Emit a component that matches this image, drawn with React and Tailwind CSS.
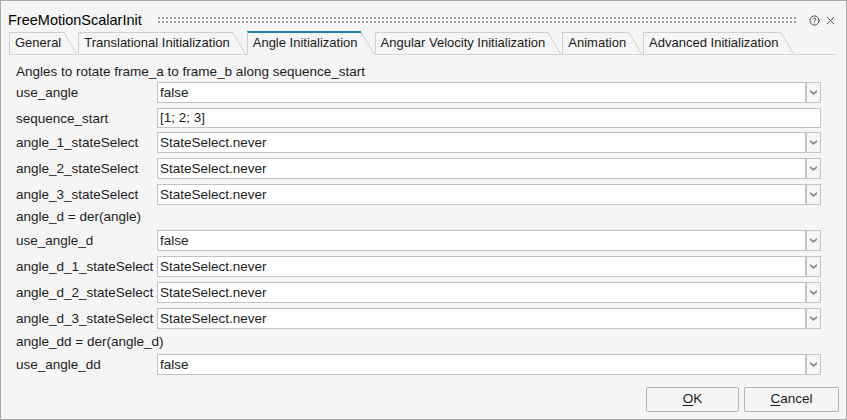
import { CircleHelp, X } from 'lucide-react';

const tabs = [
  { label: 'General' },
  { label: 'Translational Initialization' },
  { label: 'Angle Initialization', active: true },
  { label: 'Angular Velocity Initialization' },
  { label: 'Animation' },
  { label: 'Advanced Initialization' },
];

function Tab({ label, active }) {
  if (active) {
    return (
      <div className="relative z-10 -mb-px flex h-[24px] items-stretch">
        <div className="flex items-center border-t-2 border-l border-t-[#1f7fab] border-l-[#cfcfcf] bg-[#f5f5f5] pr-[3px] pl-[5px] pb-[3px]">
          {label}
        </div>
        <svg width="14" height="24" className="block">
          <polygon points="0,0 0.5,0 14,24 0,24" fill="#f5f5f5" />
          <line x1="0" y1="1" x2="13.5" y2="24" stroke="#cfcfcf" strokeWidth="1" />
        </svg>
      </div>
    );
  }
  return (
    <div className="mr-px flex h-[22px] items-stretch">
      <div className="flex items-center border-t border-l border-[#cfcfcf] pr-[3px] pl-[5px] pb-px">
        {label}
      </div>
      <svg width="13" height="22" className="block">
        <line x1="0" y1="0.5" x2="12.5" y2="22" stroke="#cfcfcf" strokeWidth="1" />
      </svg>
    </div>
  );
}

function Chevron() {
  return (
    <svg width="7" height="5" viewBox="0 0 7 5">
      <path d="M0 0 L3.5 2.6 L7 0 L7 2 L3.5 5 L0 2 Z" fill="#8c8c8c" />
    </svg>
  );
}

function Dropdown({ label, value, className = '' }) {
  return (
    <div className={`flex h-[21px] items-center ${className}`}>
      <div className="w-[141px] shrink-0 pt-[2px]">{label}</div>
      <div className="flex h-full flex-1">
        <div className="flex flex-1 items-center border border-[#c3c3c3] bg-white pl-[2px] pt-px">{value}</div>
        <div className="flex w-[15px] items-center justify-center border border-[#c3c3c3] bg-[#f5f5f5]">
          <Chevron />
        </div>
      </div>
    </div>
  );
}

function TextField({ label, value, className = '' }) {
  return (
    <div className={`flex h-[20px] items-center ${className}`}>
      <div className="w-[141px] shrink-0 pt-[2px]">{label}</div>
      <div className="flex h-full flex-1 items-center border border-[#c3c3c3] bg-white pl-[2px] pt-px">{value}</div>
    </div>
  );
}

export default function App() {
  return (
    <div className="flex h-[420px] w-[847px] flex-col border border-[#a8a8a8] bg-[#f5f5f5] font-['Liberation_Sans',Arial,sans-serif] text-[13.5px] text-[#1c1c1c]">
      <div className="flex h-[30px] shrink-0 items-start pt-[9px] pl-[7px] pr-[9px]">
        <div className="text-[14.5px] leading-[20px] text-black">FreeMotionScalarInit</div>
        <div className="mt-[6px] ml-[15px] h-[8px] flex-1 bg-[radial-gradient(circle_at_center,#9a9a9a_0_1px,transparent_1.1px)] bg-[length:4px_4px]" />
        <div className="mt-[4px] ml-[12px] flex items-center gap-[4px] text-[#3a3a3a]">
          <CircleHelp size={11} strokeWidth={2} />
          <X size={13} strokeWidth={1.5} />
        </div>
      </div>

      <div className="mx-[8px] mr-[10px] flex h-[24px] shrink-0 items-end border-b border-[#d4d4d4] text-[13px]">
        {tabs.map(t => (
          <Tab key={t.label} {...t} />
        ))}
      </div>

      <div className="flex flex-1 flex-col pt-[7px] pl-[15px] pr-[25px]">
        <div className="flex h-[20px] items-center">Angles to rotate frame_a to frame_b along sequence_start</div>
        <Dropdown label="use_angle" value="false" />
        <TextField label="sequence_start" value="[1; 2; 3]" className="mt-[5px]" />
        <Dropdown label="angle_1_stateSelect" value="StateSelect.never" className="mt-[4px]" />
        <Dropdown label="angle_2_stateSelect" value="StateSelect.never" className="mt-[5px]" />
        <Dropdown label="angle_3_stateSelect" value="StateSelect.never" className="mt-[5px]" />
        <div className="flex h-[22px] items-center pt-[2px]">angle_d = der(angle)</div>
        <Dropdown label="use_angle_d" value="false" className="mt-[3px]" />
        <Dropdown label="angle_d_1_stateSelect" value="StateSelect.never" className="mt-[5px]" />
        <Dropdown label="angle_d_2_stateSelect" value="StateSelect.never" className="mt-[5px]" />
        <Dropdown label="angle_d_3_stateSelect" value="StateSelect.never" className="mt-[5px]" />
        <div className="mt-px flex h-[22px] items-center pt-[2px]">angle_dd = der(angle_d)</div>
        <Dropdown label="use_angle_dd" value="false" className="mt-[2px]" />
      </div>

      <div className="flex shrink-0 justify-end gap-[5px] pr-[7px] pb-[7px]">
        <button className="flex h-[25px] w-[93px] items-center justify-center rounded-[2px] border border-[#b4b4b4] bg-[#f5f5f5]">
          <span><span className="underline underline-offset-2">O</span>K</span>
        </button>
        <button className="flex h-[25px] w-[95px] items-center justify-center rounded-[2px] border border-[#b4b4b4] bg-[#f5f5f5]">
          <span><span className="underline underline-offset-2">C</span>ancel</span>
        </button>
      </div>
    </div>
  );
}
